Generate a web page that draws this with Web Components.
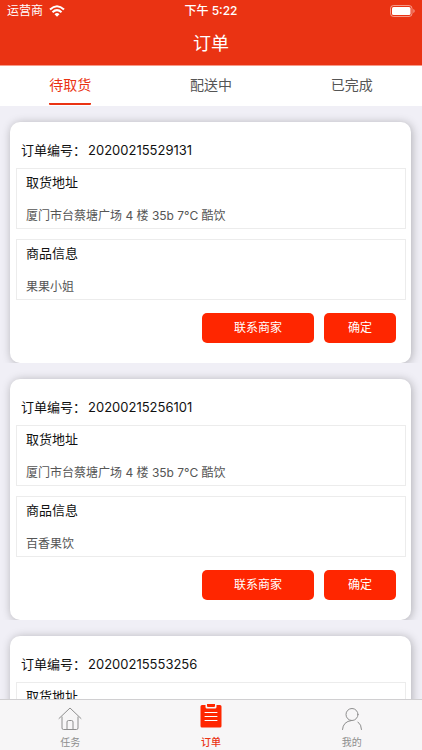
<!DOCTYPE html>
<html lang="zh-CN">
<head>
<meta charset="utf-8">
<meta name="viewport" content="width=device-width, initial-scale=1">
<title>订单</title>
<style>
  body {
    margin: 0;
    background: #f0eff6;
    color: #111;
    font-family: Inter, "Noto Sans CJK SC", sans-serif;
    --brand: #ea3313;
    --action: #ff2600;
  }
</style>
</head>
<body>
<delivery-app>
  <status-bar slot="top" carrier="运营商" time="下午 5:22"></status-bar>
  <nav-title slot="top">订单</nav-title>
  <order-tabs slot="top">
    <order-tab active>待取货</order-tab>
    <order-tab>配送中</order-tab>
    <order-tab>已完成</order-tab>
  </order-tabs>
  <order-card number="20200215529131">
    <order-field label="取货地址">厦门市台蔡塘广场 4 楼 35b 7°C 酷饮</order-field>
    <order-field label="商品信息">果果小姐</order-field>
  </order-card>
  <order-card number="20200215256101">
    <order-field label="取货地址">厦门市台蔡塘广场 4 楼 35b 7°C 酷饮</order-field>
    <order-field label="商品信息">百香果饮</order-field>
  </order-card>
  <order-card number="20200215553256">
    <order-field label="取货地址">厦门市台蔡塘广场 4 楼 35b 7°C 酷饮</order-field>
    <order-field label="商品信息">百香果饮</order-field>
  </order-card>
  <bottom-bar slot="bottom">
    <bottom-item label="任务">
      <svg width="24" height="24" viewBox="0 0 24 24" fill="none" stroke="currentColor" stroke-linecap="round" stroke-linejoin="round">
        <path d="M1 11.500 12 1l11 10.500M4 10v11q0 1.500 1.500 1.500h13q1.500 0 1.500-1.500V10M9 22.500V15q0-1.500 1.500-1.500h3Q15 13.500 15 15v7.500"/>
      </svg>
    </bottom-item>
    <bottom-item label="订单" active>
      <svg width="24" height="24" viewBox="0 0 24 24">
        <path fill="#ff2600" d="M3 1h3.500v2q0 1.500 1.500 1.500h8q1.500 0 1.500-1.500V1H21q1.500 0 1.500 1.500v19.500q0 1.500-1.500 1.500H3q-1.500 0-1.500-1.500V2.500Q1.500 1 3 1zM8 0h8v2q0 1-1 1H9Q8 3 8 2z"/>
        <path stroke="#fff" stroke-linecap="round" d="M6 8.500h12M6 12.500h12M6 16.500h12"/>
      </svg>
    </bottom-item>
    <bottom-item label="我的">
      <svg width="24" height="24" viewBox="0 0 24 24" fill="none" stroke="currentColor" stroke-linecap="round">
        <circle cx="12" cy="7.500" r="6"/>
        <path d="M11.500 13.500Q3 14.500 2.500 22.500M18 15q3.500 2.500 3.500 7.500"/>
      </svg>
    </bottom-item>
  </bottom-bar>
</delivery-app>

<script>
const define = (name, html, setup) => {
  const template = document.createElement('template');
  template.innerHTML = html;
  customElements.define(name, class extends HTMLElement {
    constructor() {
      super();
      this.attachShadow({ mode: 'open' }).append(template.content.cloneNode(true));
    }
    connectedCallback() {
      if (setup) setup(this, this.shadowRoot);
    }
  });
};

define('delivery-app', `
  <style>
    :host { display: flex; flex-direction: column; height: 100vh; }
    main { flex: 1; min-height: 0; overflow-y: auto; scrollbar-width: none; }
    main::after { content: ""; display: block; height: 16px; }
  </style>
  <header><slot name="top"></slot></header>
  <main><slot></slot></main>
  <footer><slot name="bottom"></slot></footer>`);

define('status-bar', `
  <style>
    :host { display: grid; grid-template-columns: 1fr auto 1fr; align-items: center;
      height: 22px; padding: 0 7px; background: var(--brand); color: #fff; font-size: 12px; line-height: 22px; }
    .carrier { display: flex; align-items: center; gap: 6px; }
    .time { font-weight: 500; }
    .battery { justify-self: end; display: block; }
  </style>
  <div class="carrier"><span></span>
    <svg width="16" height="12" viewBox="0 0 16 12" aria-hidden="true">
      <g fill="none" stroke="#fff" stroke-width="2.100"><path d="M1 4.500Q8-2 15 4.500M3.500 7.300Q8 3 12.500 7.300"/></g>
      <path fill="#fff" d="M5.500 9.200Q8 7 10.500 9.200L8 11.700z"/>
    </svg>
  </div>
  <div class="time"></div>
  <svg class="battery" width="25" height="12" viewBox="0 0 25 12" aria-hidden="true">
    <rect x=".5" y=".5" width="21.500" height="11" rx="3" fill="none" stroke="#fff" stroke-opacity=".5"/>
    <rect x="2" y="2" width="18.500" height="8" rx="1.500" fill="#fff"/>
    <path d="M23.300 4q1.400.5 1.400 2t-1.400 2z" fill="#fff" fill-opacity=".5"/>
  </svg>`,
  (el, root) => {
    root.querySelector('.carrier span').textContent = el.getAttribute('carrier');
    root.querySelector('.time').textContent = el.getAttribute('time');
  });

define('nav-title', `
  <style>
    :host { display: block; background: var(--brand); color: #fff; border-bottom: 1px solid #f79a88; }
    h1 { margin: 0; font-size: 18px; font-weight: 400; line-height: 43px; text-align: center; }
  </style>
  <h1><slot></slot></h1>`);

define('order-tabs', `
  <style>:host { display: flex; height: 40px; background: #fff; }</style>
  <slot></slot>`);

define('order-tab', `
  <style>
    :host { flex: 1; display: flex; justify-content: center; }
    button { box-sizing: border-box; margin-bottom: 1px; padding: 1px 0 0; border: 0; border-bottom: 2px solid transparent;
      border-radius: 1px; background: none; color: #555; font: inherit; font-size: 14px; line-height: 36px; }
    :host([active]) button { color: var(--brand); border-color: var(--brand); }
  </style>
  <button type="button"><slot></slot></button>`);

define('order-card', `
  <style>
    :host { display: block; overflow: hidden; padding: 16px 11px 0 10px; }
    article { display: flex; flex-direction: column; gap: 10px; padding: 18px 5px 20px 6px; border-radius: 10px;
      background: #fff; box-shadow: 1px 1px 10px rgba(0, 0, 0, .28); }
    h2 { display: flex; gap: 2px; margin: 0 5px -2px; font-size: 13px; font-weight: 400; line-height: 20px; }
    .actions { display: flex; justify-content: flex-end; gap: 10px; padding: 3px 10px 0 0; }
    button { height: 30px; border: 0; border-radius: 5px; background: var(--action); color: #fff;
      font: inherit; font-size: 12px; line-height: 30px; padding: 0 24px; }
    button.contact { padding: 0 32px; }
  </style>
  <article>
    <h2>订单编号：<span></span></h2>
    <slot></slot>
    <div class="actions">
      <button type="button" class="contact">联系商家</button>
      <button type="button">确定</button>
    </div>
  </article>`,
  (el, root) => { root.querySelector('h2 span').textContent = el.getAttribute('number'); });

define('order-field', `
  <style>
    :host { display: block; border: 1px solid #ececec; padding: 4px 9px 2px; }
    h3 { margin: 0 0 15px; font-size: 13px; font-weight: 400; line-height: 18px; }
    p { margin: 0; color: #555; font-size: 12px; line-height: 20px; }
  </style>
  <h3></h3>
  <p><slot></slot></p>`,
  (el, root) => { root.querySelector('h3').textContent = el.getAttribute('label'); });

define('bottom-bar', `
  <style>
    :host { display: block; }
    nav { display: flex; height: 50px; border-top: 1px solid #d0cfd1; background: #f7f6f7; }
  </style>
  <nav><slot></slot></nav>`);

define('bottom-item', `
  <style>
    :host { flex: 1; display: flex; justify-content: center; color: #8e8e8e; }
    a { display: flex; flex-direction: column; align-items: center; justify-content: flex-end; gap: 4px;
      color: inherit; text-decoration: none; font-size: 10px; line-height: 15px; }
    :host([active]) a { gap: 7px; }
    :host([active]) { color: var(--brand); font-weight: 500; }
    ::slotted(svg) { display: block; }
  </style>
  <a href="#"><slot></slot><span></span></a>`,
  (el, root) => { root.querySelector('span').textContent = el.getAttribute('label'); });
</script>
</body>
</html>
